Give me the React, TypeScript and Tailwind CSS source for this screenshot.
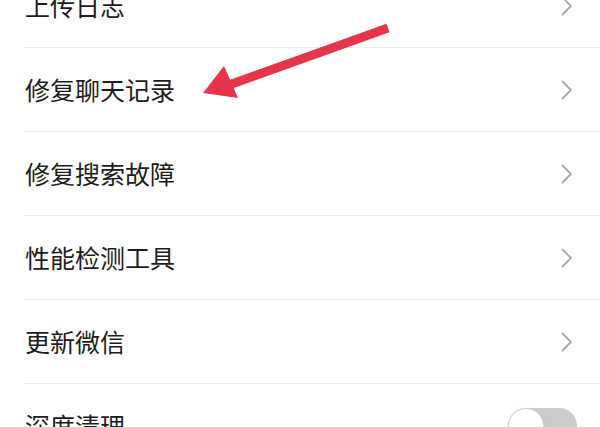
import React from "react";

type Row = { label: string; kind: "link" | "toggle" };

const rows: Row[] = [
  { label: "上传日志", kind: "link" },
  { label: "修复聊天记录", kind: "link" },
  { label: "修复搜索故障", kind: "link" },
  { label: "性能检测工具", kind: "link" },
  { label: "更新微信", kind: "link" },
  { label: "深度清理", kind: "toggle" },
];

function Chevron() {
  return (
    <svg width="12" height="20" viewBox="0 0 12 20" fill="none">
      <path d="M1.5 1.5 L10 10 L1.5 18.5" stroke="#a9a9a9" strokeWidth="1.8" strokeLinecap="round" strokeLinejoin="round" />
    </svg>
  );
}

function Toggle() {
  return (
    <div className="relative w-[69px] h-[36px] rounded-full bg-[#cbcbcb]">
      <div className="absolute left-0 top-0 w-[36px] h-[36px] rounded-full bg-white border border-[#d6d6d6] shadow-sm" />
    </div>
  );
}

export default function App() {
  return (
    <div
      className="relative w-[600px] h-[427px] overflow-hidden bg-white"
      style={{ fontFamily: '"Noto Sans CJK SC", "Noto Sans", sans-serif' }}
    >
      <div className="-mt-[36px] pl-6">
        {rows.map((row) => (
          <div
            key={row.label}
            className="h-[84px] flex items-center justify-between border-b border-[#ededed] pr-[27px]"
          >
            <span className="text-[25px] leading-none text-[#1c1c1c] pl-px">{row.label}</span>
            {row.kind === "link" ? <Chevron /> : <div className="-mr-[4px]"><Toggle /></div>}
          </div>
        ))}
      </div>

      {/* red annotation arrow */}
      <svg className="absolute left-0 top-0 pointer-events-none" width="600" height="427" viewBox="0 0 600 427">
        <line x1="388" y1="28" x2="226" y2="86" stroke="#e6344a" strokeWidth="9" />
        <polygon points="203,93 224,66 238,98" fill="#e6344a" />
      </svg>
    </div>
  );
}
